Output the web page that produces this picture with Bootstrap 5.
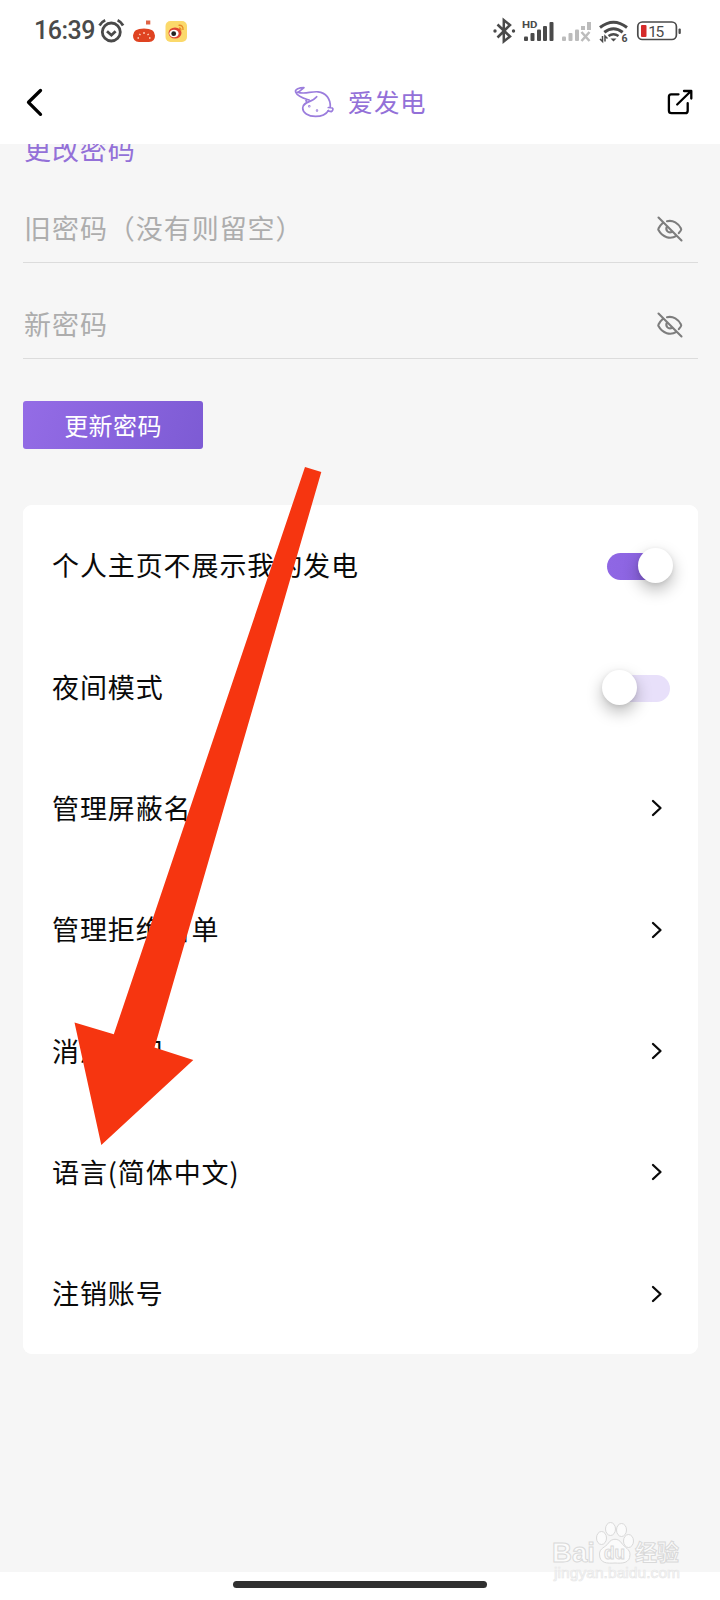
<!DOCTYPE html>
<html lang="zh-CN">
<head>
<meta charset="utf-8">
<meta name="viewport" content="width=device-width, initial-scale=1">
<title>爱发电</title>
<link href="https://cdn.jsdelivr.net/npm/bootstrap@5.3.0/dist/css/bootstrap.min.css" rel="stylesheet">
<style>
  body { font-family: "Noto Sans CJK SC", sans-serif; color: #0a0a0a; }
  .screen { width: 720px; height: 1600px; }
  svg { display: block; flex: none; }
  .statusbar { height: 62px; padding: 0 39px 0 34px; }
  .clock { font: 500 25px/62px Roboto, sans-serif; color: #4a4a4a; letter-spacing: -.5px; width: 60px; white-space: nowrap; }
  .appbar { height: 82px; padding: 0 26px 2px 25px; }
  .brand { color: #9370d8; font-size: 25.5px; line-height: 78px; letter-spacing: .6px; margin-left: 7px; }
  .brand span { margin: -2px 0 0 12px; }
  .content-area { height: 1428px; background: #f6f6f6; padding: 0 22px 0 23px; }
  .section-title { font-size: 27px; letter-spacing: .9px; line-height: 40px; height: 28px; color: #9370d8; padding-left: 1px; }
  .section-title span { display: block; margin-top: -15px; }
  .field { border-bottom: 1px solid #dcdcdc; color: #adadad; font-size: 27px; letter-spacing: .95px; padding: 0 14px 0 1px; }
  .field span { margin-top: -1px; }
  .field-old { height: 91px; padding-top: 24px; }
  .field-new { height: 96px; padding-top: 28px; }
  .btn-update { width: 180px; height: 48px; margin-top: 42px; border-radius: 3px; border: 0; color: #fff; font-size: 24px; letter-spacing: .4px; line-height: 46px; background: linear-gradient(110deg, #946ce6, #7d5bd4); }
  .settings { --bs-list-group-bg: #fff; margin-top: 56px; border-radius: 9px; background: #fff; }
  .setting { height: 121.35px; padding: 0 28px 0 29px; font-size: 27px; letter-spacing: .9px; border: 0; color: #0a0a0a; }
  .setting .chev { margin-right: 6px; }
  .toggle { width: 63px; height: 27px; border-radius: 14px; background: #e8e0fa; position: relative; top: 1px; }
  .toggle i { position: absolute; top: -5px; left: -5px; width: 35px; height: 35px; border-radius: 50%; background: #fff; box-shadow: 0 7px 16px rgba(0,0,0,.27), 0 1px 4px rgba(0,0,0,.08); }
  .toggle.on { background: linear-gradient(90deg, #8f67e4, #8a62df); }
  .toggle.on i { left: 31px; }
  .homebar { width: 254px; height: 7px; margin-top: 9px; border-radius: 4px; background: #303030; }
  .overlay { position: absolute; left: 0; top: 0; pointer-events: none; }
</style>
</head>
<body class="bg-white">
<div class="screen position-relative overflow-hidden">
  <header>
    <div class="statusbar d-flex align-items-center justify-content-between">
      <div class="d-flex align-items-center">
        <span class="clock">16:39</span>
        <svg width="100" height="40" viewBox="94 11 100 40" fill="none">
          <g stroke="#4a4a4a" stroke-width="2.8"><circle cx="111.300" cy="32" r="9"/><path d="M107 31.2l4.400 4 4.200-4"/><path d="M99.500 25.500q2.200-3.800 5.700-5.300M117.600 20.200q3.500 1.500 5.500 5.300"/></g>
          <path d="M133 35.500q0-7 11-7t11 7q0 6.500-6 6.500h-10q-6 0-6-6.500z" fill="#df4321"/>
          <path d="M146 20.500h4.300v4H146z" fill="#df6344"/>
          <path d="M144 34v-2M140.500 35.200l-1.200-1.400M147.500 35.200l1.200-1.400M139 38h-1.500M149 38h1.500" stroke="#ffd9c4" stroke-width="1.300"/>
          <rect x="165.500" y="21" width="21.500" height="21" rx="5" fill="#fbd96b"/>
          <ellipse cx="175" cy="33" rx="6.500" ry="5.500" fill="#df4633"/>
          <ellipse cx="174" cy="33.500" rx="4.600" ry="3.800" fill="#fff"/><circle cx="173.700" cy="33.700" r="2.400" fill="#222"/>
          <path d="M178.500 25.300q5-.5 4.500 4.700M179 28q2 0 2 2.500" stroke="#e88b29" stroke-width="1.300"/>
        </svg>
      </div>
      <svg width="190" height="40" viewBox="491 11 190 40" fill="none">
        <path d="M497.500 24.500l12.500 12-6.200 5V20l6.200 5-12.500 12.500" stroke="#4a4a4a" stroke-width="2.500"/>
        <g fill="#4a4a4a"><circle cx="495" cy="31" r="1.700"/><circle cx="513.500" cy="31" r="1.700"/>
          <rect x="524" y="36.500" width="4" height="4.500" rx="1"/><rect x="530.500" y="33" width="4" height="8" rx="1"/><rect x="537" y="29.500" width="4" height="11.500" rx="1"/><rect x="543" y="26" width="4" height="15" rx="1"/><rect x="549.500" y="22" width="4" height="19" rx="1"/>
        </g>
        <text x="522" y="28.200" font-family="Roboto" font-size="9.500" font-weight="700" fill="#4a4a4a" textLength="15.500" lengthAdjust="spacingAndGlyphs">HD</text>
        <g fill="#bcbcbc"><rect x="562" y="36.500" width="4" height="4.500" rx="1"/><rect x="568.500" y="33" width="4" height="8" rx="1"/><rect x="575" y="29.500" width="4" height="11.500" rx="1"/><rect x="581" y="26" width="4" height="4"/><rect x="587" y="22" width="4" height="8"/></g>
        <path d="M581.500 32l8 9M589.500 32l-8 9" stroke="#bcbcbc" stroke-width="2.500"/>
        <g stroke="#4a4a4a" stroke-width="3"><path d="M600 27.500q13.500-10.500 27 0"/><path d="M604.300 32.200q9.200-7 18.400 0"/><path d="M608.500 36q5-3.500 10 0" stroke-width="2.500"/></g>
        <path d="M610.500 38.500h6L613.500 41.500z" fill="#4a4a4a"/>
        <path d="M602.500 36v5.500l-2.500-2.500M605 41.500V36l2.500 2.500" stroke="#4a4a4a" stroke-width="1.500"/>
        <text x="621.400" y="42" font-family="Roboto" font-size="10.500" font-weight="700" fill="#4a4a4a">6</text>
        <rect x="637.800" y="22" width="38.600" height="17.500" rx="4.500" stroke="#4a4a4a" stroke-width="1.700"/>
        <rect x="641" y="25" width="5.500" height="12" rx="1" fill="#d52a2a"/><rect x="678.500" y="28.500" width="2.300" height="5.500" rx="1" fill="#4a4a4a"/>
        <text x="648.300" y="36.800" font-family="Roboto" font-size="15.500" fill="#4a4a4a" textLength="15.800">15</text>
      </svg>
    </div>
    <nav class="appbar d-flex align-items-center justify-content-between">
      <svg width="20" height="30" viewBox="25 87 20 30"><path d="M40.500 90.500L28.500 102.300l12 12" fill="none" stroke="#000" stroke-width="3.300" stroke-linecap="round" stroke-linejoin="round"/></svg>
      <div class="brand d-flex align-items-center">
        <svg width="44" height="36" viewBox="292 84 44 36" fill="none" stroke="#9b7ddd" stroke-width="1.700" stroke-linecap="round" stroke-linejoin="round">
          <path d="M298.500 92.200l5.500-4.500c-4.500 0-9.500 1.500-8.300 4.500 1.500 4 7.500 6 12.300 7.600M297.500 92.200c7.500 2.500 13-1 20.500-.4 8 .8 12.500 7 12.300 15M328.500 110.500c-2.500 4-7.500 5.900-13 5.900-7.500 0-12.800-3.600-12.800-8.400 0-6.500 9.500-5.500 14-11.300M306.500 101.800c-1.200-1.600-.3-2.800 2.500-2M328.300 107.500l4 .5c1.300.7.5 3-1 3.600l-3.500-.8"/>
          <circle cx="309.300" cy="106.300" r=".4"/><circle cx="317" cy="110.500" r=".4"/>
        </svg>
        <span>爱发电</span>
      </div>
      <svg width="28" height="28" viewBox="666 88 28 28" fill="none" stroke="#000" stroke-width="2.300" stroke-linecap="round" stroke-linejoin="round"><path d="M678.500 94.300h-7.300q-2.300 0-2.300 2.500v13.700q0 2.700 2.700 2.700h13.600q2.500 0 2.500-2.500v-7.500M684 91h7.300v7.500M690.500 91.500l-13.300 13"/></svg>
    </nav>
  </header>

  <main class="content-area">
    <div class="section-title overflow-hidden"><span>更改密码</span></div>
    <div class="field field-old d-flex align-items-center justify-content-between"><span>旧密码（没有则留空）</span>
      <svg width="28" height="28" viewBox="0 0 28 28"><use href="#eyeoff"/></svg></div>
    <div class="field field-new d-flex align-items-center justify-content-between"><span>新密码</span>
      <svg width="28" height="28" viewBox="0 0 28 28"><use href="#eyeoff"/></svg></div>
    <button type="button" class="btn btn-update d-block p-0">更新密码</button>

    <div class="settings list-group">
      <div class="setting list-group-item d-flex align-items-center justify-content-between">个人主页不展示我的发电<span class="toggle on"><i></i></span></div>
      <div class="setting list-group-item d-flex align-items-center justify-content-between">夜间模式<span class="toggle"><i></i></span></div>
      <div class="setting list-group-item d-flex align-items-center justify-content-between">管理屏蔽名单<svg class="chev" width="14" height="20" viewBox="0 0 14 20"><use href="#chevron"/></svg></div>
      <div class="setting list-group-item d-flex align-items-center justify-content-between">管理拒绝名单<svg class="chev" width="14" height="20" viewBox="0 0 14 20"><use href="#chevron"/></svg></div>
      <div class="setting list-group-item d-flex align-items-center justify-content-between">消息通知<svg class="chev" width="14" height="20" viewBox="0 0 14 20"><use href="#chevron"/></svg></div>
      <div class="setting list-group-item d-flex align-items-center justify-content-between">语言(简体中文)<svg class="chev" width="14" height="20" viewBox="0 0 14 20"><use href="#chevron"/></svg></div>
      <div class="setting list-group-item d-flex align-items-center justify-content-between">注销账号<svg class="chev" width="14" height="20" viewBox="0 0 14 20"><use href="#chevron"/></svg></div>
    </div>
  </main>
  <div class="homebar mx-auto"></div>

  <!-- Arrow annotation and watermark lie over the page -->
  <svg class="overlay" width="720" height="1600" viewBox="0 0 720 1600">
    <defs>
      <g id="chevron" fill="none" stroke="#0a0a0a" stroke-width="2.300" stroke-linecap="round" stroke-linejoin="round"><path d="M3 3l7.500 7L3 17"/></g>
      <g id="eyeoff" fill="none" stroke="#7d7d7d" stroke-width="2.100" stroke-linecap="round"><path d="M2.500 2.500l23 23M11 6.200c6-1.500 11.500 2 14 7.300q.5 1-.2 2l-2 2.700M6.500 8.200Q4 10.300 2.500 13.500q-.5.800 0 1.600c4 7.500 12 9.500 18 5.700M11 11.500c-2 3.500 1 7 5 5.500"/></g>
    </defs>
    <path d="M305 467L321.300 472 154.500 1047.500 193.300 1060 101.300 1145 74.500 1022.500 113.800 1034.300z" fill="#f63510"/>
    <g fill="#fbfbfb" stroke="#d9d9d9" stroke-width="1">
      <text x="552" y="1562" font-family="Liberation Sans" font-size="28" font-weight="700" textLength="43" lengthAdjust="spacingAndGlyphs">Bai</text>
      <path d="M599.500 1554c0-6 6-6.500 9-11 3-5 10-5 13 0 3 4.500 8.500 6 8.500 11.500 0 9-8 9-15 8.500-8 .5-15.500 .5-15.500-9z"/>
      <ellipse cx="601.500" cy="1538" rx="5" ry="6.500"/><ellipse cx="610.500" cy="1529" rx="5" ry="6.500"/><ellipse cx="621.500" cy="1530" rx="5" ry="6.500"/><ellipse cx="628.500" cy="1541" rx="5" ry="6.500"/>
      <text x="604" y="1559" font-family="Liberation Sans" font-size="18" font-weight="700" textLength="21" lengthAdjust="spacingAndGlyphs">du</text>
      <text x="635" y="1560" font-family="Noto Sans CJK SC" font-size="22" font-weight="700" textLength="44">经验</text>
      <text x="554" y="1578" font-family="Liberation Sans" font-size="15.500" stroke="#e7e7e7" stroke-width=".7" textLength="126">jingyan.baidu.com</text>
    </g>
  </svg>
</div>
<script src="https://cdn.jsdelivr.net/npm/bootstrap@5.3.0/dist/js/bootstrap.bundle.min.js"></script>
</body>
</html>
